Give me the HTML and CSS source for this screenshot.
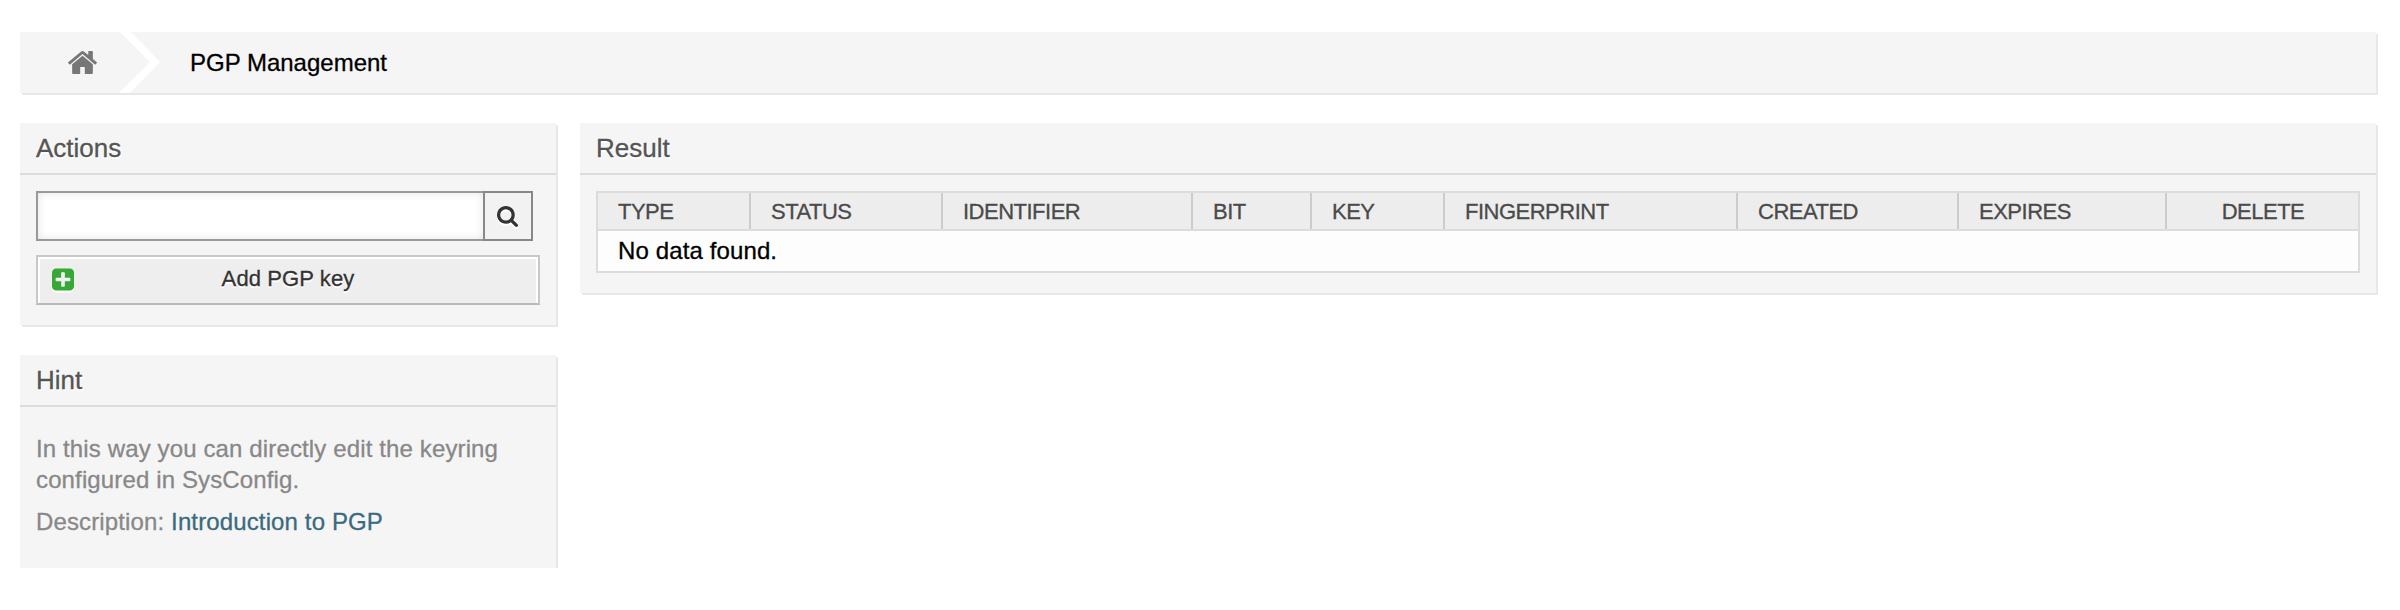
FILE: index.html
```html
<!DOCTYPE html>
<html lang="en">
<head>
<meta charset="utf-8">
<title>PGP Management</title>
<link rel="stylesheet" href="styles.css">
</head>
<body>
<nav class="breadcrumb box">
  <a class="home" aria-label="Home"><svg class="icon-home" viewBox="89 253 1614 1283" preserveAspectRatio="none"><path d="M1472 992v480q0 26-19 45t-45 19h-384v-384h-256v384h-384q-26 0-45-19t-19-45v-480q0-1 .5-3t.5-3l575-474 575 474q1 2 1 6zm223-69l-62 74q-8 9-21 11h-3q-13 0-21-7l-692-577-692 577q-12 8-24 7-13-2-21-11l-62-74q-8-10-7-23.5t11-21.5l719-599q32-26 76-26t76 26l244 204v-195q0-14 9-23t23-9h192q14 0 23 9t9 23v408l219 182q10 8 11 21.5t-7 23.5z"/></svg></a>
  <svg class="chevron" viewBox="0 0 40 61"><path d="M0 0H11L40 30L10 61H-1L30 30Z"/></svg>
  <span class="crumb">PGP Management</span>
</nav>
<main class="columns">
  <aside class="sidebar">
    <section class="box">
      <h2 class="box-title">Actions</h2>
      <div class="actions">
        <form class="search">
          <input class="search-input" type="text" aria-label="Search">
          <button class="search-button" type="button" aria-label="Search"><svg class="icon-search" viewBox="64 128 1664 1664"><path d="M1216 832q0-185-131.5-316.5t-316.5-131.5-316.5 131.5-131.5 316.5 131.5 316.5 316.5 131.5 316.5-131.5 131.5-316.5zm512 832q0 52-38 90t-90 38q-54 0-90-38l-343-342q-179 124-399 124-143 0-273.5-55.5t-225-150-150-225-55.5-273.5 55.5-273.5 150-225 225-150 273.5-55.5 273.5 55.5 225 150 150 225 55.5 273.5q0 220-124 399l343 343q37 37 37 90z"/></svg></button>
        </form>
        <a class="add"><svg class="icon-plus" viewBox="128 128 1536 1536"><path d="M1408 960v-128q0-26-19-45t-45-19h-320v-320q0-26-19-45t-45-19h-128q-26 0-45 19t-19 45v320h-320q-26 0-45 19t-19 45v128q0 26 19 45t45 19h320v320q0 26 19 45t45 19h128q26 0 45-19t19-45v-320h320q26 0 45-19t19-45zm256-544v960q0 119-84.5 203.5t-203.5 84.5h-960q-119 0-203.5-84.5t-84.5-203.5v-960q0-119 84.5-203.5t203.5-84.5h960q119 0 203.5 84.5t84.5 203.5z"/></svg><span class="add-label">Add PGP key</span></a>
      </div>
    </section>
    <section class="box">
      <h2 class="box-title">Hint</h2>
      <div class="hint">
        <p class="hint-text">In this way you can directly edit the keyring configured in SysConfig.</p>
        <p class="hint-text">Description: <a class="link">Introduction to PGP</a></p>
      </div>
    </section>
  </aside>
  <section class="box result">
    <h2 class="box-title">Result</h2>
    <div class="table">
      <div class="row head">
        <span class="cell">Type</span><span class="cell">Status</span><span class="cell">Identifier</span><span class="cell">Bit</span><span class="cell">Key</span><span class="cell">Fingerprint</span><span class="cell">Created</span><span class="cell">Expires</span><span class="cell center">Delete</span>
      </div>
      <div class="empty">No data found.</div>
    </div>
  </section>
</main>
</body>
</html>
```
FILE: styles.css
```css
* { box-sizing: border-box; }
body {
  margin: 0;
  padding: 32px 24px 0 20px;
  background: #fff;
  font: 24px "Liberation Sans", Arial, sans-serif;
  color: #000;
  -webkit-text-stroke: 0.3px;
}
svg { display: block; }
.box { background: #f5f5f5; box-shadow: 2px 2px 0 #e8e8e8; }
.breadcrumb { display: flex; height: 61px; line-height: 61px; }
.home { width: 100px; padding: 19px 0 0 48px; }
.icon-home { width: 29px; height: 23px; fill: #777; }
.chevron { width: 40px; height: 61px; fill: #fff; }
.crumb { margin-left: 30px; }
.columns { display: flex; align-items: flex-start; gap: 24px; margin-top: 30px; }
.sidebar { width: 536px; display: flex; flex-direction: column; gap: 30px; }
.result { flex: 1; }
.box-title {
  margin: 0;
  height: 52px;
  padding-left: 16px;
  border-bottom: 2px solid #dcdcdc;
  font-size: 26px;
  font-weight: 400;
  line-height: 50px;
  color: #555;
  text-shadow: 1px 2px 0 #fff;
}
.actions { padding: 16px 16px 20px; }
.search { display: flex; width: 497px; height: 50px; }
.search-input {
  flex: 1;
  min-width: 0;
  padding: 0 12px;
  border: 2px solid #999;
  border-right: 0;
  background: #fff;
  box-shadow: inset 0 0 10px #e6e6e6;
  font: inherit;
}
.search-button {
  width: 50px;
  padding: 0 0 0 12px;
  border: 2px solid #888;
  background: #f2f2f2;
}
.icon-search { width: 21px; height: 21px; fill: #333; filter: drop-shadow(0 2px 0 #fff); }
.add {
  display: flex;
  align-items: flex-start;
  height: 50px;
  margin-top: 14px;
  border: 2px solid #c8c8c8;
  border-bottom-color: #b8b8b8;
  background: #eee;
  box-shadow: inset 2px 2px 0 #fff, inset -2px 0 0 #fff;
}
.icon-plus { width: 22px; height: 23px; margin: 11px 0 0 14px; fill: #35a835; filter: drop-shadow(0 2px 0 #fff); }
.add-label {
  flex: 1;
  padding-right: 36px;
  text-align: center;
  font-size: 22px;
  line-height: 44px;
  letter-spacing: 0.1px;
  color: #333;
  text-shadow: 0 2px 0 #fff;
}
.hint { padding: 26px 16px 31px; color: #888; line-height: 31px; letter-spacing: 0.13px; }
.hint-text { margin: 0; }
.hint-text + .hint-text { margin-top: 11px; }
.link { color: #3a6a80; }
.table { margin: 16px 16px 20px; border: 2px solid #dcdcdc; }
.row {
  display: grid;
  grid-template-columns: 153px 192px 250px 119px 133px 293px 221px 208px 1fr;
}
.head {
  height: 38px;
  border-bottom: 2px solid #dcdcdc;
  background: #ededed;
  font-size: 22px;
  line-height: 36px;
  letter-spacing: -0.5px;
  text-transform: uppercase;
  color: #4a4a4a;
}
.cell { padding: 1px 0 0 20px; border-right: 2px solid #ccc; height: 36px; }
.cell:last-child { border-right: 0; }
.center { padding-left: 1px; text-align: center; }
.empty { height: 40px; padding: 2px 0 0 20px; background: #fdfdfd; line-height: 36px; letter-spacing: 0.12px; }
```
